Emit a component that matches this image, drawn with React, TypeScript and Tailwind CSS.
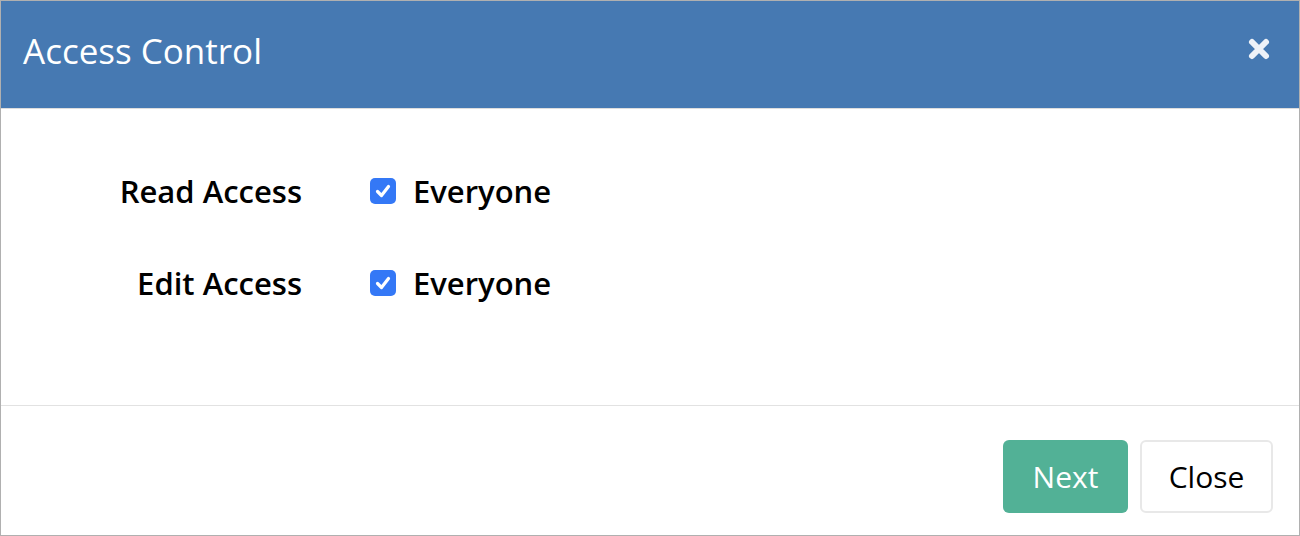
import { useState } from 'react';

// Access control dialog: header, permission rows, footer actions
function CheckRow({ label }: { label: string }) {
  const [on, setOn] = useState(true);
  return (
    <div className="flex items-center h-[46px]">
      <div className="w-[301px] text-right font-semibold text-[31px] text-black">{label}</div>
      <button
        type="button"
        onClick={() => setOn(v => !v)}
        className={`ml-[68px] w-[26px] h-[26px] rounded-[5px] flex items-center justify-center ${on ? 'bg-[#3478f6]' : 'bg-white border border-gray-400'}`}
      >
        {on && (
          <svg width="20" height="20" viewBox="0 0 20 20">
            <path d="M4.5 10.5 L8.5 14.5 L15.5 5.5" fill="none" stroke="white" strokeWidth="3.2" strokeLinecap="round" strokeLinejoin="round" />
          </svg>
        )}
      </button>
      <span className="ml-[17px] font-semibold text-[31px] text-black">Everyone</span>
    </div>
  );
}

export default function App() {
  return (
    <div className="w-[1300px] h-[536px] bg-white border border-[#b0b0b0] flex flex-col" style={{ fontFamily: '"Open Sans", sans-serif' }}>
      <div className="h-[108px] bg-[#4679b2] border-b border-[#dddddd] flex items-center justify-between pl-[22px] pr-[28px] shrink-0">
        <h1 className="text-white text-[35px] font-normal mt-[-6px]">Access Control</h1>
        <svg width="24" height="24" viewBox="0 0 24 24" className="mt-[-12px]">
          <path d="M5 5 L19 19 M19 5 L5 19" stroke="#eef2f8" strokeWidth="6" strokeLinecap="round" />
        </svg>
      </div>
      <div className="flex-1 flex flex-col pt-[59px] gap-[46px]">
        <CheckRow label="Read Access" />
        <CheckRow label="Edit Access" />
      </div>
      <div className="h-[130px] border-t border-[#e2e2e2] flex items-start justify-end gap-[12px] pt-[34px] pr-[26px] shrink-0">
        <button type="button" className="h-[73px] w-[125px] rounded-[6px] bg-[#52b196] text-white text-[30px]">Next</button>
        <button type="button" className="h-[73px] w-[133px] rounded-[6px] bg-white border-2 border-[#e8e8e8] text-black text-[30px]">Close</button>
      </div>
    </div>
  );
}
